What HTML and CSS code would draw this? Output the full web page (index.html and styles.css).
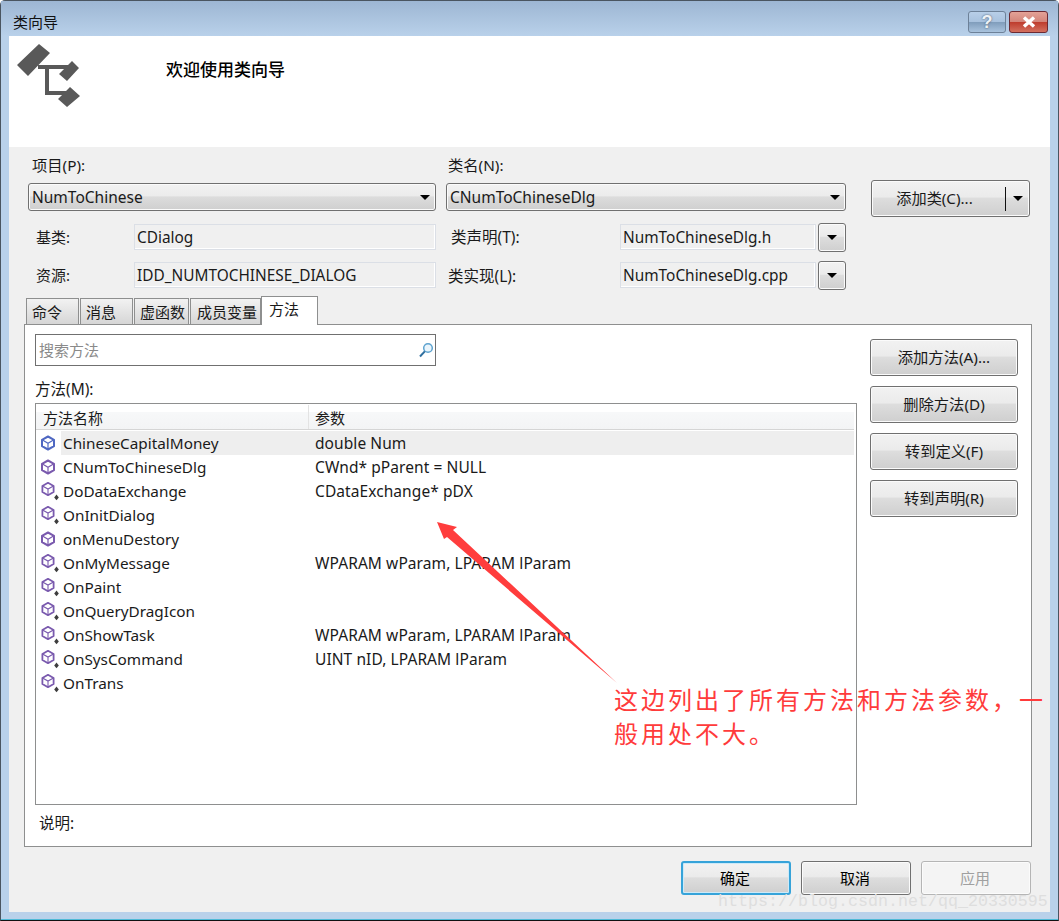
FILE: index.html
```html
<!DOCTYPE html>
<html lang="zh">
<head>
<meta charset="utf-8">
<title>类向导</title>
<link rel="stylesheet" href="styles.css">
</head>
<body>
<svg class="defs" width="0" height="0" aria-hidden="true">
  <defs>
    <symbol id="cube" viewBox="0 0 16 16">
      <path d="M8 1.5 14 4.8V11.2L8 14.5 2 11.2V4.8Z" fill="#fff" stroke="currentColor" stroke-width="2" stroke-linejoin="round"/>
      <path d="M2.5 5 8 8.2 13.5 5M8 8.2V14" fill="none" stroke="currentColor" stroke-width="1.2"/>
    </symbol>
    <symbol id="cube-p" viewBox="0 0 20 20">
      <path d="M7 .8 12.6 4V10L7 13.2 1.4 10V4Z" fill="#fff" stroke="currentColor" stroke-width="1.8" stroke-linejoin="round"/>
      <path d="M2 4.2 7 7 12 4.2M7 7V12.6" fill="none" stroke="currentColor" stroke-width="1.1"/>
      <path d="M15.5 12.5 17.8 15.5 15.5 18.2 13.2 15.5Z" fill="#3d3d3d"/>
    </symbol>
  </defs>
</svg>
<div class="window">
  <header class="titlebar">
    <span class="title">类向导</span>
    <div class="caption">
      <span class="cap help">?</span>
      <span class="cap close">
        <svg width="16" height="12" viewBox="0 0 16 12"><path d="M3 1.5 13 10.5M13 1.5 3 10.5" stroke="#fff" stroke-width="3.4" fill="none"/></svg>
      </span>
    </div>
  </header>
  <div class="client">
    <section class="banner">
      <svg class="logo" width="64" height="64" viewBox="17 44 64 64" aria-hidden="true">
        <path fill="#595959" d="M39 44 50 53 28 76 17 65ZM72 61 79 68 67 81 59 74ZM70 87 80 96 67 107 58 99Z"/>
        <path fill="none" stroke="#595959" stroke-width="4" d="M38 67H68M47 67V93H72"/>
      </svg>
      <h1 class="welcome">欢迎使用类向导</h1>
    </section>
    <section class="form">
      <div class="col col-left">
        <label class="top-label">项目(P):</label>
        <div class="combo"><span>NumToChinese</span><i class="tri"></i></div>
        <div class="field first"><span class="f-label indent8">基类:</span><span class="readonly wide">CDialog</span></div>
        <div class="field"><span class="f-label indent8">资源:</span><span class="readonly wide">IDD_NUMTOCHINESE_DIALOG</span></div>
      </div>
      <div class="col col-mid">
        <label class="top-label">类名(N):</label>
        <div class="combo"><span>CNumToChineseDlg</span><i class="tri"></i></div>
        <div class="field first"><span class="f-label m-label indent5">类声明(T):</span><span class="readonly narrow">NumToChineseDlg.h</span><span class="btn drop"><i class="tri"></i></span></div>
        <div class="field"><span class="f-label m-label indent2 low">类实现(L):</span><span class="readonly narrow">NumToChineseDlg.cpp</span><span class="btn drop"><i class="tri"></i></span></div>
      </div>
      <div class="col col-right">
        <div class="btn split"><span class="split-text">添加类(C)...</span><span class="split-arrow"><i class="tri"></i></span></div>
      </div>
    </section>
    <nav class="tabs">
      <span class="tab t1">命令</span>
      <span class="tab t1">消息</span>
      <span class="tab t3">虚函数</span>
      <span class="tab t4">成员变量</span>
      <span class="tab active">方法</span>
    </nav>
    <section class="panel">
      <div class="panel-main">
        <div class="search"><span class="search-text">搜索方法</span>
          <svg width="16" height="17" viewBox="0 0 16 17" aria-hidden="true"><circle cx="10" cy="6" r="4.3" fill="#eaf5fc" stroke="#5ea3cf" stroke-width="1.5"/><path d="M6.8 9.4 2 14.5" stroke="#2f6f9f" stroke-width="2"/></svg>
        </div>
        <div class="list-label">方法(M):</div>
        <div class="list">
          <div class="list-head"><span class="h-name">方法名称</span><span class="h-param">参数</span></div>
          <div class="row sel"><svg class="ic blue" width="16" height="16"><use href="#cube"/></svg><span class="name">ChineseCapitalMoney</span><span class="param">double Num</span></div>
          <div class="row"><svg class="ic" width="16" height="16"><use href="#cube"/></svg><span class="name">CNumToChineseDlg</span><span class="param">CWnd* pParent = NULL</span></div>
          <div class="row"><svg class="ic pr" width="20" height="20"><use href="#cube-p"/></svg><span class="name">DoDataExchange</span><span class="param">CDataExchange* pDX</span></div>
          <div class="row"><svg class="ic pr" width="20" height="20"><use href="#cube-p"/></svg><span class="name">OnInitDialog</span><span class="param"></span></div>
          <div class="row"><svg class="ic" width="16" height="16"><use href="#cube"/></svg><span class="name">onMenuDestory</span><span class="param"></span></div>
          <div class="row"><svg class="ic pr" width="20" height="20"><use href="#cube-p"/></svg><span class="name">OnMyMessage</span><span class="param">WPARAM wParam, LPARAM lParam</span></div>
          <div class="row"><svg class="ic pr" width="20" height="20"><use href="#cube-p"/></svg><span class="name">OnPaint</span><span class="param"></span></div>
          <div class="row"><svg class="ic pr" width="20" height="20"><use href="#cube-p"/></svg><span class="name">OnQueryDragIcon</span><span class="param"></span></div>
          <div class="row"><svg class="ic pr" width="20" height="20"><use href="#cube-p"/></svg><span class="name">OnShowTask</span><span class="param">WPARAM wParam, LPARAM lParam</span></div>
          <div class="row"><svg class="ic pr" width="20" height="20"><use href="#cube-p"/></svg><span class="name">OnSysCommand</span><span class="param">UINT nID, LPARAM lParam</span></div>
          <div class="row"><svg class="ic pr" width="20" height="20"><use href="#cube-p"/></svg><span class="name">OnTrans</span><span class="param"></span></div>
        </div>
        <div class="desc">说明:</div>
      </div>
      <div class="panel-side">
        <span class="btn side">添加方法(A)...</span>
        <span class="btn side">删除方法(D)</span>
        <span class="btn side">转到定义(F)</span>
        <span class="btn side">转到声明(R)</span>
      </div>
    </section>
    <footer class="footer">
      <span class="btn foot default">确定</span>
      <span class="btn foot">取消</span>
      <span class="btn foot disabled">应用</span>
    </footer>
  </div>
  <svg class="arrow" width="1059" height="921" viewBox="0 0 1059 921" aria-hidden="true">
    <path fill="#ff3d3d" d="M437 522 457 527 453 530 617 683 447 537 444 539Z"/>
  </svg>
  <p class="note">这边列出了所有方法和方法参数，一般用处不大。</p>
  <span class="watermark">https://blog.csdn.net/qq_20330595</span>
</div>
</body>
</html>
```
FILE: styles.css
```css
* { box-sizing: border-box; }
html, body { margin: 0; padding: 0; }
body {
  width: 1059px;
  height: 921px;
  overflow: hidden;
  background: #fff;
  font-family: "Noto Sans", "Noto Sans CJK SC", sans-serif;
  font-size: 15px;
  color: #1a1a1a;
}
.defs { position: absolute; }
.window {
  position: relative;
  width: 1059px;
  height: 921px;
  display: flex;
  flex-direction: column;
  padding: 0 8px 7px;
  background: #b9d1ea;
  border: 1px solid #4a5560;
  border-bottom-color: #111;
  border-radius: 5px 5px 0 0;
  box-shadow: inset 0 -1px 0 #4fb9d6;
}
.titlebar {
  height: 35px;
  margin: 0 -8px;
  padding: 0 10px 0 12px;
  display: flex;
  align-items: flex-start;
  justify-content: space-between;
  background: linear-gradient(#9db6d3, #b9d1ea);
}
.title { font-size: 15px; line-height: 20px; margin-top: 11px; color: #111; }
.caption { display: flex; gap: 3px; margin-top: 10px; }
.cap {
  height: 22px;
  display: flex;
  align-items: center;
  justify-content: center;
  border-radius: 3px;
}
.help {
  width: 38px;
  border: 1px solid #6d8198;
  background: linear-gradient(#b8cfe8 0, #a9c2de 48%, #7f9cbb 50%, #a9c3de 100%);
  color: #eef2f6;
  font: bold 18px "Liberation Sans", sans-serif;
  text-shadow: 0 0 2px #3b4c60;
}
.close {
  width: 39px;
  border: 1px solid #6b2a33;
  background: linear-gradient(#e3a297 0, #d4857a 48%, #be3b2c 50%, #d3705f 100%);
}
.client {
  width: 1041px;
  height: 876px;
  flex: none;
  display: flex;
  flex-direction: column;
  background: #f0f0f0;
}
.banner {
  height: 111px;
  flex: none;
  display: flex;
  align-items: flex-start;
  background: #fff;
  padding: 8px 0 0 8px;
}
.logo { flex: none; }
.welcome {
  margin: 15px 0 0 85px;
  font-size: 17px;
  line-height: 22px;
  font-weight: 500;
  color: #000;
}
.form {
  flex: none;
  height: 150px;
  display: flex;
  padding-left: 19px;
}
.col { display: flex; flex-direction: column; }
.col-left { width: 408px; margin-right: 10px; }
.col-mid { width: 400px; margin-right: 25px; }
.col-right { width: 159px; padding-top: 33px; }
.top-label { height: 36px; line-height: 36px; padding-left: 4px; font-size: 15.3px; }
.col-mid .top-label { padding-left: 2px; }
.combo {
  height: 28px;
  display: flex;
  align-items: center;
  justify-content: space-between;
  padding: 0 5px 0 3px;
  border: 1px solid #707070;
  border-radius: 3px;
  box-shadow: inset 0 0 0 1px #fbfbfb;
  background: linear-gradient(#f2f2f2 0, #ececec 45%, #dcdcdc 50%, #cfcfcf 100%);
  font-size: 15.5px;
}
.tri {
  display: block;
  width: 0;
  height: 0;
  border-left: 5px solid transparent;
  border-right: 5px solid transparent;
  border-top: 5px solid #000;
}
.field { height: 26px; margin-top: 12px; display: flex; align-items: center; }
.field.first { margin-top: 13px; }
.f-label { width: 106px; flex: none; line-height: 26px; }
.m-label { width: 174px; font-size: 15.5px; }
.low { padding-top: 1px; }
.indent8 { padding-left: 8px; }
.indent5 { padding-left: 5px; }
.indent2 { padding-left: 2px; }
.readonly {
  height: 26px;
  line-height: 26px;
  padding-left: 2px;
  border: 1px solid #dbdfe6;
  box-shadow: inset -1px -1px 0 #fff;
  background: #f0f0f0;
  font-size: 15.4px;
}
.wide { width: 302px; }
.narrow { width: 196px; }
.btn {
  display: flex;
  align-items: center;
  justify-content: center;
  border: 1px solid #707070;
  border-radius: 3px;
  box-shadow: inset 0 0 0 1px #fbfbfb;
  background: linear-gradient(#f2f2f2 0, #ebebeb 45%, #dddddd 50%, #cfcfcf 100%);
}
.drop { width: 28px; height: 29px; margin-left: 2px; flex: none; }
.split { width: 159px; height: 37px; font-size: 15.2px; }
.split-text { flex: 1; text-align: center; padding: 0 8px 4px 0; }
.split-arrow {
  width: 24px;
  height: 24px;
  display: flex;
  align-items: center;
  justify-content: center;
  border-left: 1px solid #111;
}
.tabs {
  flex: none;
  height: 28px;
  margin-top: -1px;
  padding-left: 17px;
  display: flex;
  align-items: flex-end;
  position: relative;
  z-index: 1;
}
.tab {
  height: 26px;
  margin-right: 1px;
  padding-left: 5px;
  line-height: 26px;
  border: 1px solid #8e8f8f;
  border-bottom: 0;
  background: linear-gradient(#f2f2f2, #d6d6d6);
  font-size: 15px;
}
.t1 { width: 53px; }
.t3 { width: 55px; }
.t4 { width: 71px; padding-left: 6px; }
.tab.active {
  width: 57px;
  height: 29px;
  margin: 0 0 -1px -1px;
  padding-left: 7px;
  line-height: 25px;
  background: #fff;
}
.panel {
  flex: none;
  width: 1008px;
  height: 523px;
  margin-left: 15px;
  display: flex;
  padding: 9px 0 0 10px;
  border: 1px solid #8e8f8f;
  background: #fff;
}
.panel-main { width: 822px; flex: none; }
.search {
  width: 401px;
  height: 32px;
  display: flex;
  align-items: center;
  justify-content: space-between;
  padding: 0 1px 0 3px;
  border: 1px solid #707070;
  color: #8a8a8a;
}
.search-text { position: relative; top: -1px; }
.list-label { height: 37px; padding: 13px 0 0 0; line-height: 20px; font-size: 15.5px; }
.list {
  height: 402px;
  border: 1px solid #8e8f8f;
  padding: 1px 2px 0 0;
}
.list-head {
  height: 25px;
  display: flex;
  border-bottom: 1px solid #d5d5d5;
  background: linear-gradient(#fff 0, #fff 30%, #f7f8f9 31%, #f3f4f5 100%);
  line-height: 26px;
  font-size: 15px;
}
.h-name { width: 273px; padding-left: 7px; border-right: 1px solid #e3e3e3; }
.h-param { padding-left: 6px; }
.row {
  height: 24px;
  display: grid;
  grid-template-columns: 25px 254px 1fr;
  align-items: stretch;
  line-height: 24px;
  font-size: 15.5px;
}
.row:nth-child(2) { margin-top: 1px; }
.ic { color: #7a5aae; margin: 4px 0 0 4px; }
.ic.blue { color: #4f68c2; }
.ic.pr { margin: 3px 0 0 5px; width: 20px; }
.name { padding-left: 2px; white-space: nowrap; font-size: 15.3px; }
.param { white-space: nowrap; letter-spacing: .08px; }
.sel .name, .sel .param { background: #eeeeee; }
.desc { padding: 8px 0 0 4px; line-height: 20px; font-size: 15.5px; }
.panel-side {
  margin: 5px 0 0 13px;
  width: 148px;
  display: flex;
  flex-direction: column;
  gap: 10px;
}
.side { height: 37px; padding-bottom: 3px; font-size: 15.3px; }
.footer {
  flex: none;
  margin: 14px 19px 0 0;
  display: flex;
  justify-content: flex-end;
  gap: 10px;
}
.foot { width: 110px; height: 34px; padding: 0 2px 2px 0; font-size: 15px; color: #000; }
.foot.default { border: 2px solid #36a3d9; box-shadow: inset 0 0 0 1px #cdeaf8; }
.foot.disabled {
  border-color: #b5b5b5;
  background: #f4f4f4;
  color: #a0a0a0;
}
.arrow { position: absolute; left: -1px; top: -1px; pointer-events: none; }
.note {
  position: absolute;
  left: 613px;
  top: 681px;
  width: 440px;
  margin: 0;
  font-family: "Noto Sans CJK SC", sans-serif;
  font-size: 24px;
  line-height: 34px;
  letter-spacing: 3px;
  font-weight: 400;
  color: #ff3b3b;
}
.watermark {
  position: absolute;
  left: 717px;
  top: 891px;
  font-family: "Liberation Mono", monospace;
  font-size: 16.67px;
  line-height: 20px;
  color: #dedede;
  white-space: nowrap;
  pointer-events: none;
}
```
